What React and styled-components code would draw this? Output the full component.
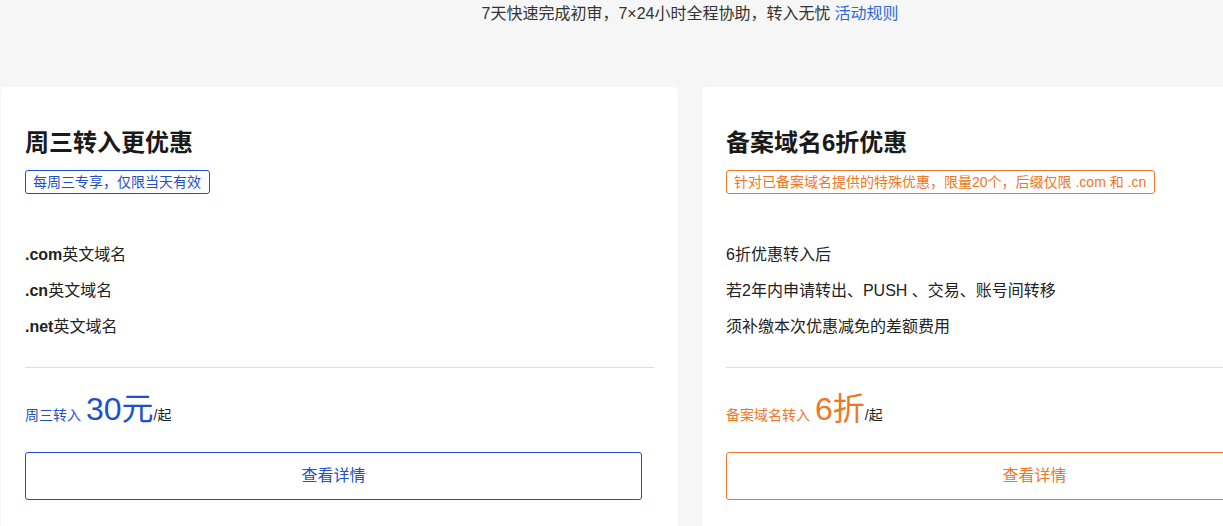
import React from 'react';
import styled, { createGlobalStyle } from 'styled-components';

const GlobalStyle = createGlobalStyle`
  html, body {
    margin: 0;
    padding: 0;
    background: #f6f6f6;
    overflow: hidden;
  }
  body {
    font-family: "Liberation Sans", "Noto Sans CJK SC", sans-serif;
    color: #222;
  }
  * { box-sizing: border-box; }
`;

// the page is wider than the window, as in the original layout
const Page = styled.div`
  width: 1379px;
  padding-left: 1px;
`;

const Intro = styled.p`
  margin: 0;
  padding-top: 4px;
  height: 87px;
  text-align: center;
  font-size: 16px;
  line-height: 20px;
  color: #333;
`;

const RuleLink = styled.a`
  color: #2a6ad8;
  text-decoration: none;
  margin-left: 4px;
  cursor: pointer;
`;

const Cards = styled.div`
  display: grid;
  grid-template-columns: 677px 677px;
  gap: 24px;
`;

const Card = styled.article`
  background: #fff;
  border-radius: 4px;
  padding: 40px 24px 40px;
`;

const Title = styled.h2`
  margin: 0;
  font-size: 24px;
  line-height: 32px;
  font-weight: 700;
  color: #1a1a1a;
`;

const Tag = styled.span`
  display: inline-block;
  margin-top: 11px;
  padding: 0 8px 0 7px;
  font-size: 14px;
  line-height: 22px;
  border: 1px solid ${p => p.$color};
  border-radius: 3px;
  color: ${p => p.$color};
`;

const List = styled.ul`
  list-style: none;
  margin: 49px 0 0;
  padding: 0;
  display: flex;
  flex-direction: column;
  gap: 12px;
`;

const Item = styled.li`
  font-size: 16px;
  line-height: 24px;
  color: #222;

  b {
    font-weight: 700;
  }
`;

const Divider = styled.hr`
  margin: 28px 0 0;
  border: none;
  border-top: 1px solid #dcdcdc;
`;

const PriceRow = styled.div`
  margin-top: 21px;
  display: flex;
  align-items: baseline;
  height: 40px;
  color: ${p => p.$color};
`;

const PriceLabel = styled.span`
  font-size: 14px;
  margin-right: 5px;
`;

const PriceValue = styled.span`
  font-size: 32px;
  line-height: 40px;
`;

const PriceUnit = styled.span`
  font-size: 14px;
  color: #222;
`;

const DetailButton = styled.button`
  display: block;
  margin-top: 23px;
  width: 617px;
  height: 48px;
  padding: 0 0 5px;
  background: #fff;
  border: 1px solid ${p => p.$color};
  border-radius: 3px;
  color: ${p => p.$color};
  font-family: inherit;
  font-size: 16px;
  cursor: pointer;
`;

const BLUE = '#1f4fcb';
const ORANGE = '#ee7727';

const offers = [
  {
    id: 1,
    title: '周三转入更优惠',
    tag: '每周三专享，仅限当天有效',
    color: BLUE,
    items: [
      [<b key="b">.com</b>, '英文域名'],
      [<b key="b">.cn</b>, '英文域名'],
      [<b key="b">.net</b>, '英文域名'],
    ],
    label: '周三转入',
    value: '30元',
  },
  {
    id: 2,
    title: '备案域名6折优惠',
    tag: '针对已备案域名提供的特殊优惠，限量20个，后缀仅限 .com 和 .cn',
    color: ORANGE,
    items: [
      ['6折优惠转入后'],
      ['若2年内申请转出、PUSH 、交易、账号间转移'],
      ['须补缴本次优惠减免的差额费用'],
    ],
    label: '备案域名转入',
    value: '6折',
  },
];

const App = () => (
  <>
    <GlobalStyle />
    <Page>
      <Intro>
        7天快速完成初审，7×24小时全程协助，转入无忧
        <RuleLink>活动规则</RuleLink>
      </Intro>
      <Cards>
        {offers.map(offer => (
          <Card key={offer.id}>
            <Title>{offer.title}</Title>
            <Tag $color={offer.color}>{offer.tag}</Tag>
            <List>
              {offer.items.map((parts, i) => (
                <Item key={i}>{parts}</Item>
              ))}
            </List>
            <Divider />
            <PriceRow $color={offer.color}>
              <PriceLabel>{offer.label}</PriceLabel>
              <PriceValue>{offer.value}</PriceValue>
              <PriceUnit>/起</PriceUnit>
            </PriceRow>
            <DetailButton $color={offer.color}>查看详情</DetailButton>
          </Card>
        ))}
      </Cards>
    </Page>
  </>
);

export default App;
